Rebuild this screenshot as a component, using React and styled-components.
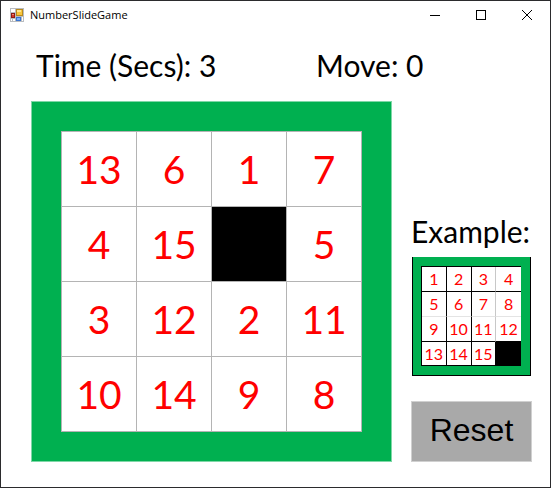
import React, { useEffect, useState } from 'react';
import styled, { createGlobalStyle } from 'styled-components';

const START = [13, 6, 1, 7, 4, 15, 0, 5, 3, 12, 2, 11, 10, 14, 9, 8];
const SOLVED = [1, 2, 3, 4, 5, 6, 7, 8, 9, 10, 11, 12, 13, 14, 15, 0];

function App() {
  const [tiles, setTiles] = useState(START);
  const [moves, setMoves] = useState(0);
  const [secs, setSecs] = useState(3);

  // the clock only runs once the first tile has been moved
  useEffect(() => {
    if (moves === 0) return undefined;
    const timer = setInterval(() => setSecs((s) => s + 1), 1000);
    return () => clearInterval(timer);
  }, [moves === 0]);

  const slide = (index) => {
    const hole = tiles.indexOf(0);
    const rows = Math.abs(Math.floor(index / 4) - Math.floor(hole / 4));
    const cols = Math.abs((index % 4) - (hole % 4));
    if (rows + cols !== 1) return;
    const next = [...tiles];
    next[hole] = tiles[index];
    next[index] = 0;
    setTiles(next);
    setMoves(moves + 1);
  };

  const reset = () => {
    setTiles(START);
    setMoves(0);
    setSecs(0);
  };

  return (
    <Window>
      <GlobalStyle />
      <TitleBar>
        <FormIcon />
        <Title>NumberSlideGame</Title>
        <Caption type="button" aria-label="Minimize">
          <Glyph><path d="M0 5.5h10" /></Glyph>
        </Caption>
        <Caption type="button" aria-label="Maximize">
          <Glyph><path d="M0.5 0.5h9v9h-9z" /></Glyph>
        </Caption>
        <Caption type="button" aria-label="Close">
          <Glyph><path d="M0 0l10 10M10 0l-10 10" shapeRendering="auto" /></Glyph>
        </Caption>
      </TitleBar>
      <Stats>
        <Label>Time (Secs): {secs}</Label>
        <Label>Move: {moves}</Label>
      </Stats>
      <Game>
        <Board>
          <Tiles>
            {tiles.map((n, i) => (
              <Tile key={n} type="button" $empty={n === 0} aria-label={n === 0 ? 'Empty' : undefined} onClick={() => slide(i)}>
                {n || ''}
              </Tile>
            ))}
          </Tiles>
        </Board>
        <Side>
          <Label as="h2">Example:</Label>
          <Example>
            <ExampleTiles>
              {SOLVED.map((n) => (
                <ExampleTile key={n} $empty={n === 0}>{n || ''}</ExampleTile>
              ))}
            </ExampleTiles>
          </Example>
          <Reset type="button" onClick={reset}>Reset</Reset>
        </Side>
      </Game>
    </Window>
  );
}

function FormIcon() {
  return (
    <svg width="14" height="14" viewBox="0 0 14 14" aria-hidden="true">
      <path d="M0 0h14v14H0z" fill="#b9bcc0" />
      <path d="M1 1h4v3H1zM1 11h1v2H1zM3 11h2v2H3zM12 9h1v4h-1z" fill="#fff" />
      <path d="M6 1h7v7H6z" fill="#b98a1c" />
      <path d="M7 2h5v5H7z" fill="#f8c63c" />
      <path d="M7 2h4v2H7z" fill="#ffe58c" />
      <path d="M1 5h4v5H1z" fill="#8f1c14" />
      <path d="M2 6h2v3H2z" fill="#d8382a" />
      <path d="M2 6h2v1H2z" fill="#ec8476" />
      <path d="M6 9h5v4H6z" fill="#3a74d0" />
      <path d="M7 10h3v2H7z" fill="#7fb0f4" />
    </svg>
  );
}

const GlobalStyle = createGlobalStyle`
  * {
    box-sizing: border-box;
  }

  body {
    margin: 0;
    background: #fff;
    font-family: Lato, sans-serif;
  }
`;

const Window = styled.div`
  min-height: 100vh;
  border: 1px solid #2b2b2d;
  background: #fff;
  color: #000;
`;

const TitleBar = styled.header`
  display: flex;
  align-items: center;
  height: 28px;
  padding-left: 9px;
`;

const Title = styled.h1`
  flex: 1;
  margin: 0 0 0 6px;
  font: 400 11px/16px "Open Sans", sans-serif;
`;

const Caption = styled.button`
  display: flex;
  align-items: center;
  justify-content: center;
  width: 46px;
  height: 28px;
  padding: 0;
  border: 0;
  background: transparent;

  &:hover {
    background: #e5e5e5;
  }
`;

const Glyph = styled.svg.attrs({ viewBox: '0 0 10 10', width: 10, height: 10, 'aria-hidden': true })`
  fill: none;
  stroke: #000;
  shape-rendering: crispEdges;
`;

const Stats = styled.div`
  display: grid;
  grid-template-columns: 280px 1fr;
  padding: 18px 18px 0 35px;
`;

const Label = styled.p`
  margin: 0;
  font-size: 30px;
  font-weight: 400;
  line-height: 36px;
  white-space: nowrap;
`;

const Game = styled.main`
  display: grid;
  grid-template-columns: 1fr 121px;
  gap: 19px;
  padding: 18px 18px 25px 30px;
`;

const Board = styled.section`
  padding: 29px;
  border: 1px solid #7fd7a7;
  background: #00b050;
`;

const Tiles = styled.div`
  display: grid;
  grid-template-columns: repeat(4, 1fr);
  border: solid #b4b4b4;
  border-width: 1px 0 0 1px;
`;

const Tile = styled.button`
  aspect-ratio: 1;
  padding: 0;
  border: solid #b4b4b4;
  border-width: 0 1px 1px 0;
  border-radius: 0;
  background: ${(props) => (props.$empty ? '#000' : '#fff')};
  color: #f00;
  font: 400 39px/48px Lato, sans-serif;
`;

const Side = styled.aside`
  display: flex;
  flex-direction: column;
  justify-content: flex-end;
`;

const Example = styled.div`
  margin: 8px 1px 25px;
  padding: 9px 9px 9px 8px;
  border: solid #000;
  border-width: 0 1px 1px;
  background: #00b050;
`;

const ExampleTiles = styled.div`
  display: grid;
  grid-template-columns: repeat(4, 1fr);
  grid-template-rows: repeat(3, 25px) 24px;
  border: solid #000;
  border-width: 1px 0 0 1px;
`;

const ExampleTile = styled.div`
  display: flex;
  align-items: center;
  justify-content: center;
  border: solid #000;
  border-width: 0 1px 1px 0;
  background: ${(props) => (props.$empty ? '#000' : '#fff')};
  color: #f00;
  font-size: 16px;
  line-height: 20px;

  &:nth-child(4n + 3):not(:nth-child(15)) {
    border-right-color: #c8c8c8;
  }

  &:nth-child(4n) {
    border-right: 0;
  }

  &:nth-child(n + 5):nth-child(-n + 8) {
    border-bottom-color: #e4e4e4;
  }
`;

const Reset = styled.button`
  height: 61px;
  padding: 0 0 4px;
  border: 1px solid #d0d0d0;
  border-radius: 0;
  background: #a9a9a9;
  color: #000;
  font: 400 32px/40px "Liberation Sans", Arial, sans-serif;
`;

export default App;
